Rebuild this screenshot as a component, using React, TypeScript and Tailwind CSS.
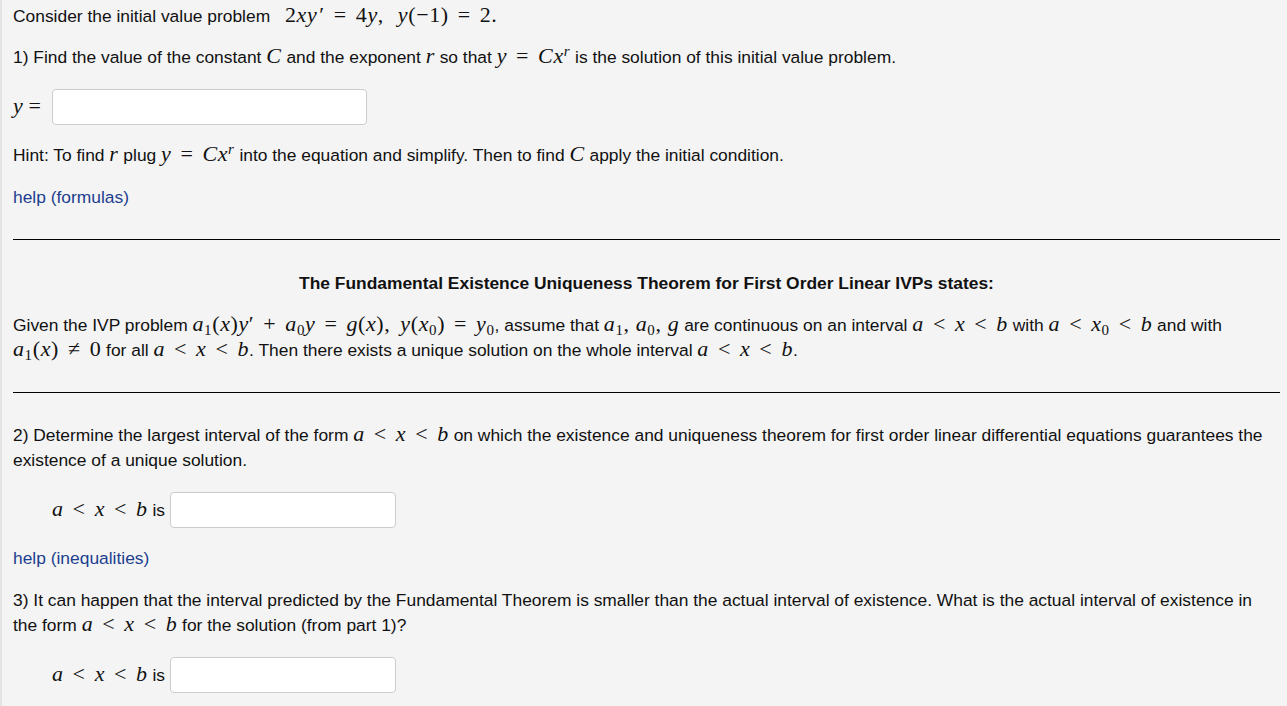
import React from "react";

const V = ({ children }: { children: React.ReactNode }) => (
  <span className="italic">{children}</span>
);
const R = ({ children }: { children: React.ReactNode }) => (
  <span className="mx-[9px]">{children}</span>
);
const S = ({ children }: { children: React.ReactNode }) => (
  <sub className="not-italic text-[15px]">{children}</sub>
);
const M = ({ children }: { children: React.ReactNode }) => (
  <span className="font-['Liberation_Serif',serif] text-[22px] leading-none tracking-[0.6px] whitespace-nowrap">{children}</span>
);

const Interval = () => (
  <M>
    <V>a</V>
    <R>&lt;</R>
    <V>x</V>
    <R>&lt;</R>
    <V>b</V>
  </M>
);

const Input = ({ w }: { w: string }) => (
  <div className={`${w} h-[36px] bg-white border border-[#cccccc] rounded-[4px]`} />
);

export default function App() {
  return (
    <div className="min-h-screen w-full bg-[#f4f4f4] border-l-2 border-[#e4e4e4] pl-[11px] pr-[7px] text-[17.4px] leading-[25px] text-[#111] font-['Liberation_Sans',Arial,sans-serif] overflow-hidden">
      <div className="flex flex-col">
        <div className="mt-[4px] h-[25px]">
          Consider the initial value problem{" "}
          <span className="ml-[10px]">
            <M>
              2<V>xy</V>
              <span className="ml-[2px]">′</span>
              <R>=</R>4<V>y</V>,<span className="ml-[14px]" />
              <V>y</V>(−1)<R>=</R>2.
            </M>
          </span>
        </div>

        <div className="mt-[16px] h-[25px]">
          1) Find the value of the constant <M><V>C</V></M> and the exponent <M><V>r</V></M> so that{" "}
          <M>
            <V>y</V>
            <R>=</R>
            <V>Cx</V>
            <sup className="text-[15px]"><V>r</V></sup>
          </M>{" "}
          is the solution of this initial value problem.
        </div>

        <div className="mt-[19px] flex items-center h-[36px]">
          <span className="w-[39px]">
            <M>
              <V>y</V>
              <span className="ml-[5px]">=</span>
            </M>
          </span>
          <Input w="w-[315px]" />
        </div>

        <div className="mt-[18px] h-[25px]">
          Hint: To find <M><V>r</V></M> plug{" "}
          <M>
            <V>y</V>
            <R>=</R>
            <V>Cx</V>
            <sup className="text-[15px]"><V>r</V></sup>
          </M>{" "}
          into the equation and simplify. Then to find <M><V>C</V></M> apply the initial condition.
        </div>

        <div className="mt-[17px] h-[25px] text-[#1d3f8f]">help (formulas)</div>

        <div className="mt-[29px] border-t border-black h-0" />

        <div className="mt-[31px] h-[25px] text-center font-bold">
          The Fundamental Existence Uniqueness Theorem for First Order Linear IVPs states:
        </div>

        <div className="mt-[17px] h-[50px] whitespace-nowrap">
          Given the IVP problem{" "}
          <M>
            <V>a</V>
            <S>1</S>(<V>x</V>)<V>y</V>′<R>+</R>
            <V>a</V>
            <S>0</S>
            <V>y</V>
            <R>=</R>
            <V>g</V>(<V>x</V>),<span className="ml-[10px]" />
            <V>y</V>(<V>x</V>
            <S>0</S>)<R>=</R>
            <V>y</V>
            <S>0</S>
          </M>
          , assume that{" "}
          <M>
            <V>a</V>
            <S>1</S>, <V>a</V>
            <S>0</S>, <V>g</V>
          </M>{" "}
          are continuous on an interval <Interval /> with{" "}
          <M>
            <V>a</V>
            <R>&lt;</R>
            <V>x</V>
            <S>0</S>
            <R>&lt;</R>
            <V>b</V>
          </M>{" "}
          and with
          <br />
          <M>
            <V>a</V>
            <S>1</S>(<V>x</V>)<R>≠</R>0
          </M>{" "}
          for all <Interval />. Then there exists a unique solution on the whole interval <Interval />.
        </div>

        <div className="mt-[29px] border-t border-black h-0" />

        <div className="mt-[30px] h-[50px]">
          2) Determine the largest interval of the form <Interval /> on which the existence and uniqueness theorem for first order linear differential equations guarantees the
          <br />
          existence of a unique solution.
        </div>

        <div className="mt-[19px] flex items-center pl-[39px] h-[36px]">
          <span className="mr-[5px]">
            <Interval /> is
          </span>
          <Input w="w-[226px]" />
        </div>

        <div className="mt-[18px] h-[25px] text-[#1d3f8f]">help (inequalities)</div>

        <div className="mt-[17px] h-[50px]">
          3) It can happen that the interval predicted by the Fundamental Theorem is smaller than the actual interval of existence. What is the actual interval of existence in
          <br />
          the form <Interval /> for the solution (from part 1)?
        </div>

        <div className="mt-[19px] flex items-center pl-[39px] h-[36px]">
          <span className="mr-[5px]">
            <Interval /> is
          </span>
          <Input w="w-[226px]" />
        </div>
      </div>
    </div>
  );
}
